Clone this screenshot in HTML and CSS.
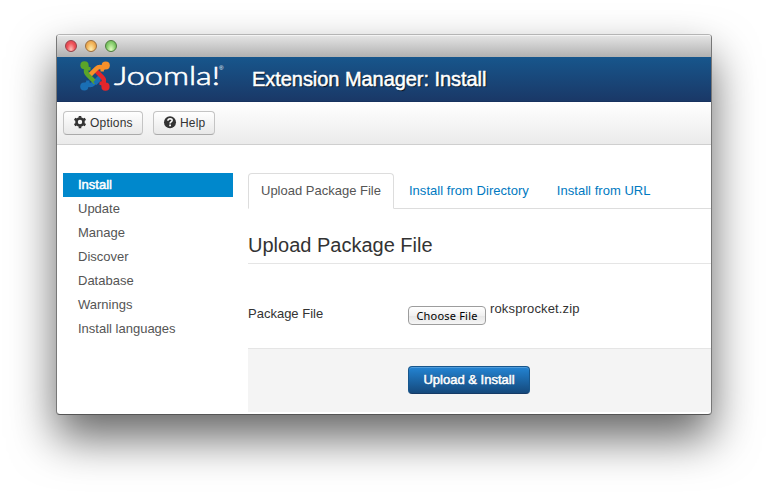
FILE: index.html
```
<!DOCTYPE html>
<html lang="en">
<head>
<meta charset="utf-8">
<title>Extension Manager: Install</title>
<link rel="stylesheet" href="styles.css">
</head>
<body>
<div class="window">
  <div class="titlebar"><i class="light red"></i><i class="light amber"></i><i class="light green"></i></div>
  <header class="header">
    <svg class="logo" width="150" height="45" viewBox="0 0 150 45">
      <defs>
        <g id="arm">
          <path d="M-10.500-10.500L-8-8Q-10.200-4.200-7.400-1.300L.6 6.700" fill="none" stroke="currentColor" stroke-width="4.400" stroke-linejoin="round"/>
          <path d="M-10-10L-7-7.200L-4.500-7.200" fill="none" stroke="currentColor" stroke-width="3.400"/>
          <circle cx="-10.500" cy="-10.700" r="4.100" fill="currentColor"/>
        </g>
      </defs>
      <g transform="translate(16 19)">
        <use href="#arm" color="#1a6fb5" transform="rotate(270)"/>
        <use href="#arm" color="#e3262b" transform="rotate(180)"/>
        <use href="#arm" color="#f7902a" transform="rotate(90)"/>
        <use href="#arm" color="#5ba529"/>
        <path d="M-.2 7.500L4.200 3.100" stroke="#1a6fb5" stroke-width="4.400"/>
      </g>
      <text class="wordmark" x="35" y="28" textLength="106" lengthAdjust="spacingAndGlyphs">Joomla!</text>
      <text class="reg" x="140" y="13">®</text>
    </svg>
    <h1>Extension Manager: Install</h1>
  </header>
  <div class="toolbar">
    <button class="btn options"><svg width="14" height="14" viewBox="0 0 14 14"><g fill="none" stroke="#333"><circle cx="7" cy="6" r="3.500" stroke-width="2.600"/><path stroke-width="2.600" d="M7-.2v2M7 10.200v2M1.600 2.900l1.800 1M10.600 8.100l1.800 1M1.600 9.100l1.800-1M10.600 3.900l1.800-1"/></g></svg>Options</button>
    <button class="btn help"><svg width="14" height="14" viewBox="0 0 14 14"><g transform="translate(0 -.7)"><circle cx="7" cy="7" r="6" fill="#333"/><path d="M4.900 5.400Q5 3.400 7.100 3.400Q9.200 3.500 9.100 5.200Q9 6.200 7.900 6.700Q7.100 7.100 7.100 8.300" fill="none" stroke="#fff" stroke-width="1.600"/><path d="M6.200 9.300h1.800v1.700H6.200z" fill="#fff"/></g></svg>Help</button>
  </div>
  <div class="content">
    <nav class="sidebar">
      <a class="active">Install</a><a>Update</a><a>Manage</a><a>Discover</a><a>Database</a><a>Warnings</a><a>Install languages</a>
    </nav>
    <main class="main">
      <div class="tabs"><a class="tab current">Upload Package File</a><a class="tab">Install from Directory</a><a class="tab">Install from URL</a></div>
      <h2>Upload Package File</h2>
      <div class="field"><label>Package File</label><button class="choose">Choose File</button><span class="filename">roksprocket.zip</span></div>
      <div class="actions"><button class="submit">Upload &amp; Install</button></div>
    </main>
  </div>
</div>
</body>
</html>
```
FILE: styles.css
```
* { box-sizing: border-box; }
body {
  margin: 0;
  height: 493px;
  padding: 34px 56px 0;
  overflow: hidden;
  background: #fff;
  color: #333;
  font: 13px/18px "Liberation Sans", Arial, sans-serif;
}
button { font: inherit; color: inherit; margin: 0; }
.window {
  width: 656px;
  height: 381px;
  border: 1px solid #777;
  border-top-color: #b5b5b5;
  border-bottom-color: #555;
  border-radius: 4px;
  background: #fff;
  overflow: hidden;
  box-shadow: 0 23px 45px rgba(0, 0, 0, .6);
}
.titlebar {
  display: flex;
  gap: 8px;
  height: 22px;
  padding: 5px 8px;
  background: linear-gradient(#e6e6e6, #b1b1b1);
  box-shadow: inset 0 1px #f4f4f4;
}
.light {
  width: 12px;
  height: 12px;
  border: 1px solid;
  border-radius: 50%;
}
.red { border-color: #954047; background: radial-gradient(ellipse at 50% 85%, #ffc0b8, #ee5259 55%, #d93d49); }
.amber { border-color: #9b6e3d; background: radial-gradient(ellipse at 50% 85%, #fff0b0, #f0b055 60%, #d99444); }
.green { border-color: #4e7b3c; background: radial-gradient(ellipse at 50% 85%, #e2ffc0, #83cb6a 60%, #60ab4d); }
.header {
  display: flex;
  height: 45px;
  padding-left: 22px;
  background: linear-gradient(#17568c, #1a3867);
  border-bottom: 1px solid #17325f;
}
.logo { flex: none; }
.wordmark { font: 300 25px Lato, sans-serif; fill: #fff; stroke: #fff; stroke-width: .6px; }
.reg { font: 6px "Liberation Sans", sans-serif; fill: #fff; }
h1 {
  margin: 0 0 0 23px;
  font-size: 20px;
  line-height: 44px;
  font-weight: 400;
  letter-spacing: -.05px;
  color: #fff;
  -webkit-text-stroke: .5px #fff;
  text-shadow: 1px 1px 1px rgba(0, 0, 0, .8);
}
.toolbar {
  display: flex;
  gap: 10px;
  height: 43px;
  padding: 9px 6px;
  background: linear-gradient(#fff, #ebebeb);
  border-bottom: 1px solid #cfcfcf;
}
.btn {
  display: flex;
  align-items: center;
  gap: 3px;
  height: 24px;
  padding: 0 0 1px 9px;
  font-size: 12px;
  letter-spacing: .2px;
  border: 1px solid #c4c4c4;
  border-bottom-color: #aaa;
  border-radius: 4px;
  background: linear-gradient(#fff, #e8e8e8);
}
.options { width: 80px; }
.help { width: 62px; }
.content { display: flex; gap: 15px; padding: 28px 0 0 6px; }
.sidebar { width: 170px; flex: none; }
.sidebar a { display: block; height: 24px; padding-left: 15px; line-height: 23px; color: #555; }
.sidebar .active { background: #0088cc; color: #fff; -webkit-text-stroke: .5px #fff; }
.main { flex: 1; }
.tabs { display: flex; gap: 2px; height: 36px; border-bottom: 1px solid #ddd; }
.tab { height: 36px; padding: 0 12px; border: 1px solid transparent; line-height: 33px; color: #0079c1; }
.tab + .tab { letter-spacing: .03px; }
.current { color: #555; background: #fff; border-color: #ddd; border-bottom-color: #fff; border-radius: 4px 4px 0 0; }
h2 {
  margin: 18px 0 0;
  height: 37px;
  border-bottom: 1px solid #e5e5e5;
  font-size: 20px;
  font-weight: 400;
  line-height: 36px;
}
.field { display: flex; height: 84px; padding-top: 42px; }
.field label { width: 160px; line-height: 16px; }
.choose {
  width: 78px;
  height: 19px;
  padding: 0;
  border: 1px solid #9d9d9d;
  border-radius: 4px;
  background: linear-gradient(#fff, #f1f1f1 50%, #e6e6e6 50%, #f5f5f5);
  color: #000;
  font: 11px/17px "Noto Sans", sans-serif;
  letter-spacing: .2px;
}
.filename { margin: -6px 0 0 4px; letter-spacing: .15px; }
.actions { height: 64px; padding-top: 17px; padding-left: 160px; background: #f4f4f4; border-top: 1px solid #e5e5e5; }
.submit {
  display: block;
  width: 122px;
  height: 28px;
  padding: 0 0 1px;
  border: 1px solid #17568c;
  border-bottom-color: #153a66;
  border-radius: 4px;
  background: linear-gradient(#2384d3, #15497c);
  box-shadow: inset 0 1px rgba(255, 255, 255, .2);
  color: #fff;
  -webkit-text-stroke: .5px #fff;
  text-shadow: 0 -1px rgba(0, 0, 0, .25);
}
```
